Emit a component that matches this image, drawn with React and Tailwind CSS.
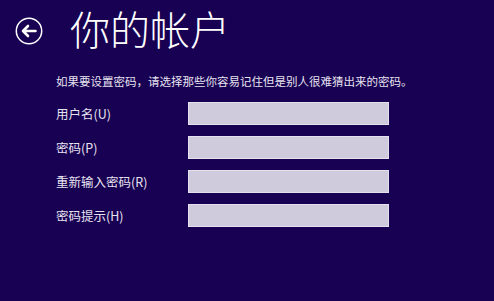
import React from 'react';

const fields = ['用户名(U)', '密码(P)', '重新输入密码(R)', '密码提示(H)'];

function BackButton() {
  return (
    <svg width="28" height="28" viewBox="0 0 28 28" fill="none" className="shrink-0">
      <circle cx="14" cy="14" r="12.7" stroke="#ffffff" strokeWidth="1.5" />
      <path
        d="M20.5 14H8M13 9L8 14L13 19"
        stroke="#ffffff"
        strokeWidth="2.6"
        strokeLinecap="round"
        strokeLinejoin="round"
      />
    </svg>
  );
}

export default function App() {
  return (
    <div className="w-[494px] h-[301px] overflow-hidden bg-[#180052] text-white font-['Noto_Sans_CJK_SC','Noto_Sans',sans-serif]">
      <header className="flex items-center h-[60px] pl-[15px]">
        <div className="mt-[2px]">
          <BackButton />
        </div>
        <h1 className="ml-[27px] -mt-[4px] text-[40px] leading-none font-light text-white">
          你的帐户
        </h1>
      </header>

      <main className="pl-[56px]">
        <p className="mt-[13px] text-[11.5px] leading-[16px] text-[#e6e3f0]">
          如果要设置密码，请选择那些你容易记住但是别人很难猜出来的密码。
        </p>

        <div className="mt-[13px] flex flex-col gap-[11px]">
          {fields.map((label) => (
            <div key={label} className="flex items-center">
              <label className="w-[132px] text-[12.5px] leading-[16px] text-[#e6e3f0]">{label}</label>
              <input
                type="text"
                className="w-[201px] h-[23px] bg-[#cfcbdd] border border-[#e4e1ee] outline-none"
              />
            </div>
          ))}
        </div>
      </main>
    </div>
  );
}
